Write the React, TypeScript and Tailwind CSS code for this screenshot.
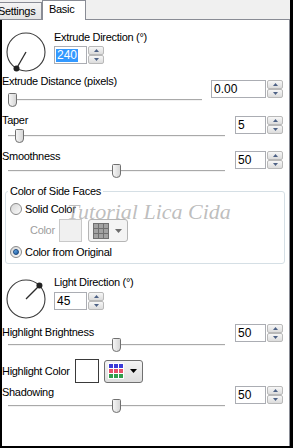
import React from "react";

function SpinButtons() {
  return (
    <div className="flex w-[16px] flex-col">
      {["up", "down"].map((dir) => (
        <div
          key={dir}
          className="flex h-[9px] items-center justify-center rounded-[2px] border border-[#b9b9b9] bg-linear-to-b from-[#f7f7f7] to-[#dcdcdc]"
        >
          <svg width="5" height="3" viewBox="0 0 5 3">
            <path d={dir === "up" ? "M0 3 L2.5 0 L5 3 Z" : "M0 0 L5 0 L2.5 3 Z"} fill="#4d6185" />
          </svg>
        </div>
      ))}
    </div>
  );
}

function SpinBox({
  value,
  inputW,
  selected,
  className = "",
}: {
  value: string;
  inputW: string;
  selected?: boolean;
  className?: string;
}) {
  return (
    <div className={`flex h-[18px] gap-[1px] ${className}`}>
      <div className={`flex h-full items-center border border-[#abadb3] bg-white pl-[1px] text-[12px] tracking-normal ${inputW}`}>
        <span className={selected ? "bg-[#3399ff] px-[1px] leading-[13px] text-white" : "px-[1px] leading-[13px]"}>
          {value}
        </span>
      </div>
      <SpinButtons />
    </div>
  );
}

function Slider({ frac, className = "" }: { frac: number; className?: string }) {
  return (
    <div className={`relative h-[14px] ${className}`}>
      <div className="mt-[6px] h-[2px] border-t border-[#a9a9a9] bg-[#f2f2f2]" />
      <svg
        className="absolute top-0"
        style={{ left: `calc(${frac} * (100% - 9px))` }}
        width="9"
        height="14"
        viewBox="0 0 9 14"
      >
        <defs>
          <linearGradient id="thumb" x1="0" y1="0" x2="1" y2="0">
            <stop offset="0" stopColor="#f8f8f8" />
            <stop offset="1" stopColor="#d4d4d4" />
          </linearGradient>
        </defs>
        <path
          d="M0.5 1.5 Q0.5 0.5 1.5 0.5 H7.5 Q8.5 0.5 8.5 1.5 V10 Q8.5 13.5 4.5 13.5 Q0.5 13.5 0.5 10 Z"
          fill="url(#thumb)"
          stroke="#707070"
        />
      </svg>
    </div>
  );
}

function Dial({ angle, className = "" }: { angle: number; className?: string }) {
  const r = 19;
  const rad = (angle * Math.PI) / 180;
  const x = 21 + r * Math.cos(rad);
  const y = 21 - r * Math.sin(rad);
  return (
    <svg className={className} width="42" height="42" viewBox="0 0 42 42">
      <circle cx="21" cy="21" r={r} fill="none" stroke="#3c3c3c" strokeWidth="1.1" />
      <line x1="21" y1="21" x2={x} y2={y} stroke="#2c2c2c" strokeWidth="1.3" />
      <circle cx={x} cy={y} r="3" fill="#222" />
    </svg>
  );
}

function Radio({ checked }: { checked?: boolean }) {
  return (
    <span className="flex h-[12px] w-[12px] shrink-0 items-center justify-center rounded-full border border-[#8a8a8a] bg-linear-to-br from-[#d6d6d6] to-[#fbfbfb]">
      {checked && (
        <span className="h-[6px] w-[6px] rounded-full border border-[#17457c] bg-linear-to-br from-[#6fb3ef] to-[#1c5a9e]" />
      )}
    </span>
  );
}

function GridDropdown({ disabled, className = "" }: { disabled?: boolean; className?: string }) {
  const rows = disabled
    ? ["bg-[#a3a3a3]", "bg-[#a3a3a3]", "bg-[#a3a3a3]"]
    : ["bg-[#3b3bd8]", "bg-[#e65069]", "bg-[#2f9e4c]"];
  return (
    <div
      className={`flex h-[23px] items-center rounded-[3px] border ${
        disabled ? "border-[#b5b5b5] bg-[#f4f4f4]" : "border-[#707070] bg-linear-to-b from-[#f4f4f4] to-[#dddddd]"
      } ${className}`}
    >
      <div className={`grid grid-cols-3 gap-[1px] p-[1px] ${disabled ? "bg-[#707070]" : "bg-white"}`}>
        {rows.flatMap((c, i) => [0, 1, 2].map((j) => <span key={`${i}-${j}`} className={`h-[4px] w-[4px] ${c}`} />))}
      </div>
      <svg className="ml-[6px]" width="7" height="4" viewBox="0 0 7 4">
        <path d="M0 0 H7 L3.5 4 Z" fill={disabled ? "#6d6d6d" : "#000"} />
      </svg>
    </div>
  );
}

export default function App() {
  return (
    <div className="flex h-[448px] w-[293px] flex-col bg-black font-['Liberation_Sans',Arial,sans-serif] text-[11px] tracking-[-0.3px] text-black">
      {/* Tabs */}
      <div className="flex h-[20px] w-[290px] shrink-0 items-end border-b border-[#898c95] bg-[#f0f0f0]">
        <div className="-ml-[4px] flex h-[17px] w-[46px] items-center border border-b-0 border-[#898c95] bg-linear-to-b from-[#f4f4f4] to-[#e4e4e4] pl-[1px] leading-[13px]">
          Settings
        </div>
        <div className="-mb-[1px] h-[20px] w-[44px] border border-b-0 border-[#898c95] bg-white pl-[6px] pt-[2px] leading-[13px]">
          Basic
        </div>
      </div>

      {/* Panel */}
      <div className="relative mb-[2px] ml-[2px] flex w-[288px] flex-1 flex-col border-r border-[#898c95] bg-white pr-[6px]">
        {/* Extrude direction */}
        <div className="mt-[11px] flex items-start">
          <Dial angle={240} className="ml-[3px]" />
          <div className="ml-[7px] flex flex-col">
            <span className="leading-[13px]">Extrude Direction (°)</span>
            <SpinBox className="mt-[2px]" value="240" inputW="w-[33px]" selected />
          </div>
        </div>

        {/* Extrude distance */}
        <div className="mt-[2px] flex items-start justify-between">
          <div className="flex flex-col">
            <span className="leading-[13px]">Extrude Distance (pixels)</span>
            <Slider className="ml-[6px] mt-[5px] w-[194px]" frac={0} />
          </div>
          <SpinBox className="mt-[5px]" value="0.00" inputW="w-[55px]" />
        </div>

        {/* Taper */}
        <div className="mt-[7px] flex items-start justify-between">
          <div className="flex flex-col">
            <span className="leading-[13px]">Taper</span>
            <Slider className="ml-[6px] mt-[2px] w-[217px]" frac={0.034} />
          </div>
          <SpinBox className="mt-[2px]" value="5" inputW="w-[31px]" />
        </div>

        {/* Smoothness */}
        <div className="mt-[7px] flex items-start justify-between">
          <div className="flex flex-col">
            <span className="leading-[13px]">Smoothness</span>
            <Slider className="ml-[6px] mt-[1px] w-[217px]" frac={0.5} />
          </div>
          <SpinBox className="mt-[1px]" value="50" inputW="w-[31px]" />
        </div>

        {/* Color of side faces */}
        <fieldset className="ml-[3px] mt-[7px] w-[280px] rounded-[3px] border border-[#d5dfe5] pb-[4px] pl-[2px]">
          <legend className="px-[2px] leading-[13px]">Color of Side Faces</legend>
          <div className="ml-[2px] mt-[4px] flex h-[14px] items-center gap-[3px]">
            <Radio />
            <span>Solid Color</span>
          </div>
          <div className="mt-[3px] flex items-center pl-[22px]">
            <span className="w-[29px] text-[#9d9d9d]">Color</span>
            <span className="h-[23px] w-[23px] border border-[#c9c9c9] bg-[#f0f0f0]" />
            <GridDropdown disabled className="ml-[6px] w-[40px] pl-[4px]" />
          </div>
          <div className="ml-[2px] mt-[3px] flex h-[14px] items-center gap-[3px]">
            <Radio checked />
            <span>Color from Original</span>
          </div>
        </fieldset>

        {/* Light direction */}
        <div className="mt-[12px] flex items-start">
          <Dial angle={45} className="ml-[3px] mt-[2px]" />
          <div className="ml-[7px] flex flex-col">
            <span className="leading-[13px]">Light Direction (°)</span>
            <SpinBox className="mt-[3px]" value="45" inputW="w-[33px]" />
          </div>
        </div>

        {/* Highlight brightness */}
        <div className="mt-[4px] flex items-start justify-between">
          <div className="flex flex-col">
            <span className="mt-[2px] leading-[13px]">Highlight Brightness</span>
            <Slider className="-mt-[1px] ml-[6px] w-[217px]" frac={0.5} />
          </div>
          <SpinBox value="50" inputW="w-[31px]" />
        </div>

        {/* Highlight color */}
        <div className="mt-[7px] flex items-center">
          <span className="w-[73px]">Highlight Color</span>
          <span className="h-[24px] w-[24px] border border-[#3a3a3a] bg-white" />
          <GridDropdown className="ml-[5px] w-[39px] pl-[3px]" />
        </div>

        {/* Shadowing */}
        <div className="mt-[3px] flex items-start justify-between">
          <div className="flex flex-col">
            <span className="leading-[13px]">Shadowing</span>
            <Slider className="ml-[6px] w-[217px]" frac={0.5} />
          </div>
          <SpinBox value="50" inputW="w-[31px]" />
        </div>

        {/* Watermark */}
        <span className="pointer-events-none absolute left-[65px] top-[175px] whitespace-nowrap font-['Liberation_Serif',serif] text-[22px] italic tracking-normal text-[#999999]/65">
          Tutorial Lica Cida
        </span>
      </div>
    </div>
  );
}
